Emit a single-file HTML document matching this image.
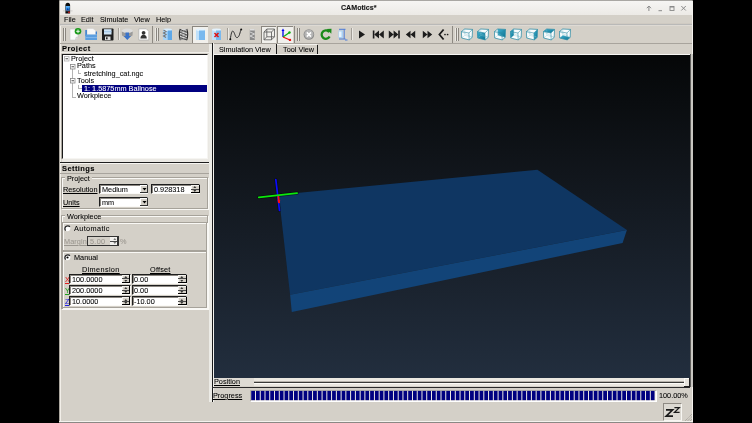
<!DOCTYPE html>
<html><head><meta charset="utf-8"><style>
html,body{margin:0;padding:0;background:#000;width:752px;height:423px;overflow:hidden;position:relative;}
.t{position:absolute;will-change:transform;white-space:nowrap;line-height:1;font-family:"Liberation Sans",sans-serif;}
.b{position:absolute;}
u{text-decoration:underline;}
</style></head><body>
<div class="b" style="left:59px;top:1px;width:634px;height:421px;background:#d4d0c8;"></div>
<div class="b" style="left:59px;top:0px;width:634px;height:1px;background:#a9a7a3;border-radius:2px 2px 0 0;"></div>
<div class="b" style="left:59px;top:1px;width:1px;height:421px;background:#aba79f;"></div>
<div class="b" style="left:60px;top:15px;width:1px;height:406px;background:#f2efe9;"></div>
<div class="b" style="left:692px;top:1px;width:1px;height:421px;background:#f4f2ee;"></div>
<div class="b" style="left:59px;top:421px;width:634px;height:1px;background:#f4f2ee;"></div>
<div class="b" style="left:59px;top:422px;width:634px;height:1px;background:#8a8884;"></div>
<div class="b" style="left:60px;top:1px;width:632px;height:14px;background:linear-gradient(#f6f5f3,#eceae6);"></div>
<div class="t" style="left:340.80px;top:4.99px;font-size:7.1px;font-weight:bold;-webkit-text-stroke:0.1px #111;color:#111;">CAMotics*</div>
<svg class="b" style="left:63px;top:1.5px;" width="10" height="13" viewBox="0 0 10 13"><path d="M2.4,3.5 Q2.4,0.8 4.8,0.8 Q7.1,0.8 7.1,3.5 V11.4 H2.4 Z" fill="#0c0c0c"/><rect x="2.8" y="4" width="3.9" height="4.6" fill="#2f8fe8"/><rect x="2.8" y="4" width="3.9" height="1.6" fill="#5ab0f5"/><path d="M3.4,8.6 L4.75,5.8 L6.1,8.6 Z" fill="#0a3fa0"/><path d="M0,8.9 H9.5" stroke="#a8a8a8" stroke-width="0.45"/><rect x="5.2" y="9.6" width="1.6" height="1.5" fill="#d02020"/></svg>
<svg class="b" style="left:645px;top:3px;" width="48" height="10" viewBox="0 0 48 10"><path d="M3.9,8 V3.2 M1.8,5.2 L3.9,3 L6,5.2" stroke="#8a8a8a" stroke-width="1" fill="none"/><path d="M13.5,7.7 H17" stroke="#8a8a8a" stroke-width="1"/><rect x="25" y="3.5" width="4" height="4" fill="none" stroke="#888" stroke-width="0.9"/><rect x="25" y="3.3" width="4" height="1.2" fill="#888"/><path d="M36.3,3 L40.8,7.5 M40.8,3 L36.3,7.5" stroke="#8a8a8a" stroke-width="1"/></svg>
<div class="b" style="left:60px;top:15px;width:632px;height:10px;background:#d4d0c8;"></div>
<div class="t" style="left:63.90px;top:15.92px;font-size:7.3px;-webkit-text-stroke:0.06px #000;color:#000;"><u>F</u>ile</div>
<div class="t" style="left:80.80px;top:15.92px;font-size:7.3px;-webkit-text-stroke:0.06px #000;color:#000;">Edit</div>
<div class="t" style="left:99.70px;top:15.92px;font-size:7.3px;-webkit-text-stroke:0.06px #000;color:#000;">Simulate</div>
<div class="t" style="left:134.00px;top:15.92px;font-size:7.3px;-webkit-text-stroke:0.06px #000;color:#000;">View</div>
<div class="t" style="left:155.60px;top:15.92px;font-size:7.3px;-webkit-text-stroke:0.06px #000;color:#000;"><u>H</u>elp</div>
<div class="b" style="left:60px;top:23px;width:632px;height:1px;background:#cfcac2;"></div>
<div class="b" style="left:60px;top:24px;width:632px;height:1px;background:#b9b9b8;"></div>
<div class="b" style="left:60px;top:25px;width:632px;height:1px;background:#dedad4;"></div>
<div class="b" style="left:60px;top:43px;width:632px;height:1px;background:#a8a49d;"></div>
<div class="b" style="left:62.5px;top:27.5px;width:3.6px;height:13px;background:#e9e7e2;"></div>
<div class="b" style="left:63.0px;top:27.5px;width:0.9px;height:13px;background:#8a867f;"></div>
<div class="b" style="left:65.0px;top:27.5px;width:0.9px;height:13px;background:#8a867f;"></div>
<svg class="b" style="left:69px;top:28px;" width="13" height="13" viewBox="0 0 13 13"><path d="M1,1 H9 V9 L6.5,12 H1 Z" fill="#fafafa" stroke="#c8c8c8" stroke-width="0.6"/><path d="M6.5,12 L7,9.3 L10,9" fill="#ddd" stroke="#bbb" stroke-width="0.5"/><circle cx="9" cy="3.3" r="3.3" fill="#1c9a1c"/><path d="M9,1.5 V5.1 M7.2,3.3 H10.8" stroke="#fff" stroke-width="0.9"/></svg>
<svg class="b" style="left:85px;top:28px;" width="13" height="13" viewBox="0 0 13 13"><path d="M2,0.5 H8 L11,3 V7 H2 Z" fill="#f8f8f8" stroke="#cfcfcf" stroke-width="0.5"/><rect x="0.3" y="2" width="1.6" height="6" fill="#3a7fd0"/><rect x="10.6" y="3.5" width="1.4" height="3" fill="#3a7fd0"/><path d="M0.3,6.5 H12 V12 H0.3 Z" fill="#5b9ee0"/><rect x="0.3" y="9" width="11.7" height="1" fill="#7fb5ea"/></svg>
<svg class="b" style="left:102px;top:28px;" width="12" height="13" viewBox="0 0 12 13"><rect x="0" y="0.5" width="11.5" height="12" rx="0.8" fill="#1e1e1e"/><rect x="2" y="1.2" width="7.5" height="5.3" fill="#cfe4f5"/><rect x="2" y="3.2" width="7.5" height="1" fill="#9fc4e4"/><rect x="3" y="8.5" width="5.5" height="3.5" fill="#ddd"/><rect x="4" y="9.3" width="1.6" height="2" fill="#222"/></svg>
<div class="b" style="left:117.5px;top:28px;width:1px;height:12px;background:#a29e97;box-shadow:1px 0 0 #ebe9e4;"></div>
<svg class="b" style="left:121px;top:28px;" width="13" height="13" viewBox="0 0 13 13"><ellipse cx="6.3" cy="3" rx="5.5" ry="2.6" fill="#dcdcdc"/><path d="M0.8,3.5 Q6.3,6.5 11.8,3.5 L11.5,7.5 L6.3,10.5 L1,7.5 Z" fill="#9a9a9a"/><path d="M4.5,4.5 H8 V8 H10 L6.3,12 L2.6,8 H4.5 Z" fill="#3b73c8"/></svg>
<svg class="b" style="left:138px;top:28px;" width="12" height="13" viewBox="0 0 12 13"><path d="M0.8,0.8 H8.3 L10.8,3.3 V12 H0.8 Z" fill="#fff" stroke="#aaa" stroke-width="0.7"/><circle cx="5.6" cy="4.8" r="1.9" fill="#333"/><path d="M2.4,10.5 Q2.6,6.8 5.6,6.8 Q8.6,6.8 8.8,10.5 Z" fill="#333"/></svg>
<div class="b" style="left:152px;top:26px;width:1px;height:17px;background:#8d8982;"></div>
<div class="b" style="left:155px;top:27.5px;width:3.6px;height:13px;background:#e9e7e2;"></div>
<div class="b" style="left:155.5px;top:27.5px;width:0.9px;height:13px;background:#8a867f;"></div>
<div class="b" style="left:157.5px;top:27.5px;width:0.9px;height:13px;background:#8a867f;"></div>
<svg class="b" style="left:162px;top:28px;" width="11" height="13" viewBox="0 0 11 13"><rect x="1" y="1.5" width="9" height="10.5" fill="#a9d3f5"/><ellipse cx="5.5" cy="1.8" rx="4.5" ry="1.2" fill="#d9ecfb"/><rect x="5.7" y="2.5" width="4.3" height="9.5" fill="#5ea8e8"/><path d="M1.5,2 L4,3.5 L1.5,5 L4,6.5 L1.5,8 L4,9.5" stroke="#777" stroke-width="1.1" fill="none"/></svg>
<svg class="b" style="left:178px;top:28px;" width="11" height="13" viewBox="0 0 11 13"><rect x="2" y="1" width="7" height="11" fill="#d8d8d8"/><path d="M2.2,1 Q0.4,6.5 2.2,12 M8.8,1 Q10.6,6.5 8.8,12" stroke="#2a2a2a" stroke-width="1.1" fill="none"/><path d="M2,1.5 Q5.5,3 9,4.2 M2,4.2 Q5.5,5.6 9,7 M2,7 Q5.5,8.3 9,9.7 M2,9.7 Q5.5,11 9,12" stroke="#333" stroke-width="0.9" fill="none"/><path d="M9,1.5 Q5.5,3 2,4.2 M9,4.2 Q5.5,5.6 2,7 M9,7 Q5.5,8.3 2,9.7 M9,9.7 Q5.5,11 2,12" stroke="#777" stroke-width="0.7" fill="none"/></svg>
<div class="b" style="left:192.4px;top:26px;width:15.400000000000006px;height:17px;background:#f1f0ec;border-left:1px solid #8a867f;border-top:1px solid #8a867f;box-sizing:border-box;"></div>
<svg class="b" style="left:195px;top:28px;" width="11" height="13" viewBox="0 0 11 13"><rect x="1" y="1.5" width="9" height="10.5" fill="#bfe0fa"/><ellipse cx="5.5" cy="1.8" rx="4.5" ry="1.2" fill="#e3f2fd"/><rect x="4" y="2.5" width="6" height="9.5" fill="#7ab9ee"/></svg>
<svg class="b" style="left:211px;top:28px;" width="11" height="13" viewBox="0 0 11 13"><rect x="1" y="1.5" width="9" height="10.5" fill="#bfe0fa"/><ellipse cx="5.5" cy="1.8" rx="4.5" ry="1.2" fill="#e3f2fd"/><rect x="5" y="2.5" width="5" height="9.5" fill="#7ab9ee"/><path d="M3.5,5 L7.5,9 M7.5,5 L3.5,9" stroke="#e01010" stroke-width="1.5"/></svg>
<div class="b" style="left:226.6px;top:28px;width:1px;height:12px;background:#a29e97;box-shadow:1px 0 0 #ebe9e4;"></div>
<svg class="b" style="left:229px;top:28px;" width="14" height="13" viewBox="0 0 14 13"><path d="M1.3,11.3 C2.5,3 3.5,1.5 5,4.5 C6.3,7 6.5,10 8.3,9.5 C10.5,9 11,4 12,1.5" stroke="#2a2a2a" stroke-width="1" fill="none"/><circle cx="1.3" cy="11.3" r="1" fill="#111"/><circle cx="12.2" cy="1.6" r="1" fill="#111"/></svg>
<svg class="b" style="left:249px;top:28px;" width="7" height="13" viewBox="0 0 7 13"><rect x="0.8" y="1" width="5" height="11" fill="#8a8a8a"/><rect x="0.8" y="1" width="5" height="1.5" fill="#ddd"/><path d="M1,4 L5.5,6 L1,8 L5.5,10" stroke="#ddd" stroke-width="0.9" fill="none"/></svg>
<div class="b" style="left:261.3px;top:26px;width:15.199999999999989px;height:17px;background:#f1f0ec;border-left:1px solid #8a867f;border-top:1px solid #8a867f;box-sizing:border-box;"></div>
<svg class="b" style="left:262.5px;top:28px;" width="13" height="13" viewBox="0 0 13 13"><path d="M1,4 H8.5 V11.8 H1 Z M3.8,1 H11.5 V8.8 H3.8 Z M1,4 L3.8,1 M8.5,4 L11.5,1 M8.5,11.8 L11.5,8.8 M1,11.8 L3.8,8.8" stroke="#555" stroke-width="0.8" fill="none"/></svg>
<div class="b" style="left:277.3px;top:26px;width:16.19999999999999px;height:17px;background:#f1f0ec;border-left:1px solid #8a867f;border-top:1px solid #8a867f;box-sizing:border-box;"></div>
<svg class="b" style="left:280.5px;top:28px;" width="11" height="13" viewBox="0 0 11 13"><path d="M2,9 L2,2" stroke="#0000f0" stroke-width="1.3"/><path d="M0.5,3 L2,0.5 L3.5,3 Z" fill="#0000f0"/><path d="M2,9 L8.5,4.5" stroke="#10b010" stroke-width="1.3"/><circle cx="8.5" cy="4.5" r="1.2" fill="#10b010"/><path d="M2,9 L9,12" stroke="#f01010" stroke-width="1.3"/><circle cx="9" cy="12" r="1.2" fill="#f01010"/></svg>
<div class="b" style="left:294px;top:26px;width:1px;height:17px;background:#8d8982;"></div>
<div class="b" style="left:296.5px;top:27.5px;width:3.6px;height:13px;background:#e9e7e2;"></div>
<div class="b" style="left:297.0px;top:27.5px;width:0.9px;height:13px;background:#8a867f;"></div>
<div class="b" style="left:299.0px;top:27.5px;width:0.9px;height:13px;background:#8a867f;"></div>
<svg class="b" style="left:302.5px;top:28px;" width="12" height="13" viewBox="0 0 12 13"><circle cx="5.9" cy="6.5" r="5.3" fill="#8a8a8a"/><circle cx="5.9" cy="6.2" r="4.5" fill="#b4b4b4"/><path d="M3.8,4.4 L8,8.6 M8,4.4 L3.8,8.6" stroke="#fff" stroke-width="1.5"/></svg>
<svg class="b" style="left:319.5px;top:28px;" width="12" height="13" viewBox="0 0 12 13"><path d="M9.3,4.2 A4.2,4.2 0 1 0 9.6,8.5" stroke="#1a8a1a" stroke-width="2.3" fill="none"/><path d="M6.5,1 L11.5,0.8 L11.3,5.8 Z" fill="#1a8a1a"/></svg>
<svg class="b" style="left:338px;top:28px;" width="10" height="13" viewBox="0 0 10 13"><rect x="0.5" y="2.5" width="4.5" height="7.5" fill="#a8d0f5"/><rect x="1" y="3.5" width="2.5" height="5.5" fill="#e8f4fd"/><path d="M1,1.3 H7.5 M6.2,1.3 V11 M1,11 H7.5 M7,12 H9.5" stroke="#4a7ad8" stroke-width="1" fill="none"/></svg>
<div class="b" style="left:351.4px;top:28px;width:1px;height:12px;background:#a29e97;box-shadow:1px 0 0 #ebe9e4;"></div>
<svg class="b" style="left:357.5px;top:29px;" width="8" height="11" viewBox="0 0 8 11"><path d="M1,1.5 L7,5.5 L1,9.5 Z" fill="#1c1c1c"/></svg>
<svg class="b" style="left:371.5px;top:29px;" width="13" height="11" viewBox="0 0 13 11"><rect x="0.8" y="1.5" width="1.6" height="8" fill="#1c1c1c"/><path d="M2.2,5.5 L7,1.5 V9.5 Z M7,5.5 L11.8,1.5 V9.5 Z" fill="#1c1c1c"/></svg>
<svg class="b" style="left:388px;top:29px;" width="13" height="11" viewBox="0 0 13 11"><rect x="10.2" y="1.5" width="1.6" height="8" fill="#1c1c1c"/><path d="M0.8,1.5 L5.6,5.5 L0.8,9.5 Z M5.6,1.5 L10.4,5.5 L5.6,9.5 Z" fill="#1c1c1c"/></svg>
<svg class="b" style="left:405px;top:29px;" width="12" height="11" viewBox="0 0 12 11"><path d="M0.8,5.5 L5.5,1.8 V9.2 Z M5.5,5.5 L10.2,1.8 V9.2 Z" fill="#1c1c1c"/></svg>
<svg class="b" style="left:421.5px;top:29px;" width="12" height="11" viewBox="0 0 12 11"><path d="M0.8,1.8 L5.5,5.5 L0.8,9.2 Z M5.5,1.8 L10.2,5.5 L5.5,9.2 Z" fill="#1c1c1c"/></svg>
<svg class="b" style="left:437.5px;top:28px;" width="12" height="13" viewBox="0 0 12 13"><path d="M5.6,1.5 L1.4,6.5 L5.6,11.5" stroke="#1c1c1c" stroke-width="1.8" fill="none"/><circle cx="7" cy="6.5" r="0.85" fill="#1c1c1c"/><circle cx="9.6" cy="6.5" r="0.85" fill="#1c1c1c"/></svg>
<div class="b" style="left:452px;top:26px;width:1px;height:17px;background:#8d8982;"></div>
<div class="b" style="left:455px;top:27.5px;width:3.6px;height:13px;background:#e9e7e2;"></div>
<div class="b" style="left:455.5px;top:27.5px;width:0.9px;height:13px;background:#8a867f;"></div>
<div class="b" style="left:457.5px;top:27.5px;width:0.9px;height:13px;background:#8a867f;"></div>
<svg width="0" height="0" style="position:absolute"><defs><linearGradient id="tg" x1="0" y1="0" x2="1" y2="1"><stop offset="0" stop-color="#3eb0d0"/><stop offset="1" stop-color="#0b7392"/></linearGradient></defs></svg>
<svg class="b" style="left:460.8px;top:28px;" width="12" height="13" viewBox="0 0 12 13"><polygon points="0.40,3.60 3.70,1.00 11.50,1.40 11.20,9.40 8.20,11.90 0.70,10.00" fill="#f9fcfd"/><line x1="3.9" y1="7.3" x2="3.7" y2="1.0" stroke="#8cc4d2" stroke-width="0.35"/><line x1="3.9" y1="7.3" x2="0.7" y2="10.0" stroke="#8cc4d2" stroke-width="0.35"/><line x1="3.9" y1="7.3" x2="11.2" y2="9.4" stroke="#8cc4d2" stroke-width="0.35"/><line x1="0.4" y1="3.6" x2="11.2" y2="9.4" stroke="#7cbccc" stroke-width="0.35"/><line x1="0.4" y1="3.6" x2="7.9" y2="5.0" stroke="#2b8aa3" stroke-width="0.6"/><line x1="7.9" y1="5.0" x2="11.5" y2="1.4" stroke="#2b8aa3" stroke-width="0.6"/><line x1="7.9" y1="5.0" x2="8.2" y2="11.9" stroke="#2b8aa3" stroke-width="0.6"/><polygon points="0.40,3.60 3.70,1.00 11.50,1.40 11.20,9.40 8.20,11.90 0.70,10.00" fill="none" stroke="#2b8aa3" stroke-width="0.75" stroke-linejoin="round"/></svg>
<svg class="b" style="left:477.15000000000003px;top:28px;" width="12" height="13" viewBox="0 0 12 13"><polygon points="0.40,3.60 3.70,1.00 11.50,1.40 11.20,9.40 8.20,11.90 0.70,10.00" fill="#f9fcfd"/><polygon points="0.40,3.60 7.90,5.00 8.20,11.90 0.70,10.00" fill="url(#tg)"/><line x1="3.9" y1="7.3" x2="3.7" y2="1.0" stroke="#8cc4d2" stroke-width="0.35"/><line x1="3.9" y1="7.3" x2="0.7" y2="10.0" stroke="#8cc4d2" stroke-width="0.35"/><line x1="3.9" y1="7.3" x2="11.2" y2="9.4" stroke="#8cc4d2" stroke-width="0.35"/><line x1="0.4" y1="3.6" x2="11.2" y2="9.4" stroke="#7cbccc" stroke-width="0.35"/><line x1="0.4" y1="3.6" x2="7.9" y2="5.0" stroke="#2b8aa3" stroke-width="0.6"/><line x1="7.9" y1="5.0" x2="11.5" y2="1.4" stroke="#2b8aa3" stroke-width="0.6"/><line x1="7.9" y1="5.0" x2="8.2" y2="11.9" stroke="#2b8aa3" stroke-width="0.6"/><polygon points="0.40,3.60 3.70,1.00 11.50,1.40 11.20,9.40 8.20,11.90 0.70,10.00" fill="none" stroke="#2b8aa3" stroke-width="0.75" stroke-linejoin="round"/></svg>
<svg class="b" style="left:493.5px;top:28px;" width="12" height="13" viewBox="0 0 12 13"><polygon points="0.40,3.60 3.70,1.00 11.50,1.40 11.20,9.40 8.20,11.90 0.70,10.00" fill="#f9fcfd"/><polygon points="3.70,1.00 11.50,1.40 11.20,9.40 3.90,7.30" fill="url(#tg)"/><line x1="3.9" y1="7.3" x2="3.7" y2="1.0" stroke="#8cc4d2" stroke-width="0.35"/><line x1="3.9" y1="7.3" x2="0.7" y2="10.0" stroke="#8cc4d2" stroke-width="0.35"/><line x1="3.9" y1="7.3" x2="11.2" y2="9.4" stroke="#8cc4d2" stroke-width="0.35"/><line x1="0.4" y1="3.6" x2="11.2" y2="9.4" stroke="#7cbccc" stroke-width="0.35"/><line x1="0.4" y1="3.6" x2="7.9" y2="5.0" stroke="#2b8aa3" stroke-width="0.6"/><line x1="7.9" y1="5.0" x2="11.5" y2="1.4" stroke="#2b8aa3" stroke-width="0.6"/><line x1="7.9" y1="5.0" x2="8.2" y2="11.9" stroke="#2b8aa3" stroke-width="0.6"/><polygon points="0.40,3.60 3.70,1.00 11.50,1.40 11.20,9.40 8.20,11.90 0.70,10.00" fill="none" stroke="#2b8aa3" stroke-width="0.75" stroke-linejoin="round"/></svg>
<svg class="b" style="left:509.85px;top:28px;" width="12" height="13" viewBox="0 0 12 13"><polygon points="0.40,3.60 3.70,1.00 11.50,1.40 11.20,9.40 8.20,11.90 0.70,10.00" fill="#f9fcfd"/><polygon points="0.40,3.60 3.70,1.00 3.90,7.30 0.70,10.00" fill="url(#tg)"/><line x1="3.9" y1="7.3" x2="3.7" y2="1.0" stroke="#8cc4d2" stroke-width="0.35"/><line x1="3.9" y1="7.3" x2="0.7" y2="10.0" stroke="#8cc4d2" stroke-width="0.35"/><line x1="3.9" y1="7.3" x2="11.2" y2="9.4" stroke="#8cc4d2" stroke-width="0.35"/><line x1="0.4" y1="3.6" x2="11.2" y2="9.4" stroke="#7cbccc" stroke-width="0.35"/><line x1="0.4" y1="3.6" x2="7.9" y2="5.0" stroke="#2b8aa3" stroke-width="0.6"/><line x1="7.9" y1="5.0" x2="11.5" y2="1.4" stroke="#2b8aa3" stroke-width="0.6"/><line x1="7.9" y1="5.0" x2="8.2" y2="11.9" stroke="#2b8aa3" stroke-width="0.6"/><polygon points="0.40,3.60 3.70,1.00 11.50,1.40 11.20,9.40 8.20,11.90 0.70,10.00" fill="none" stroke="#2b8aa3" stroke-width="0.75" stroke-linejoin="round"/></svg>
<svg class="b" style="left:526.2px;top:28px;" width="12" height="13" viewBox="0 0 12 13"><polygon points="0.40,3.60 3.70,1.00 11.50,1.40 11.20,9.40 8.20,11.90 0.70,10.00" fill="#f9fcfd"/><polygon points="7.90,5.00 11.50,1.40 11.20,9.40 8.20,11.90" fill="url(#tg)"/><line x1="3.9" y1="7.3" x2="3.7" y2="1.0" stroke="#8cc4d2" stroke-width="0.35"/><line x1="3.9" y1="7.3" x2="0.7" y2="10.0" stroke="#8cc4d2" stroke-width="0.35"/><line x1="3.9" y1="7.3" x2="11.2" y2="9.4" stroke="#8cc4d2" stroke-width="0.35"/><line x1="0.4" y1="3.6" x2="11.2" y2="9.4" stroke="#7cbccc" stroke-width="0.35"/><line x1="0.4" y1="3.6" x2="7.9" y2="5.0" stroke="#2b8aa3" stroke-width="0.6"/><line x1="7.9" y1="5.0" x2="11.5" y2="1.4" stroke="#2b8aa3" stroke-width="0.6"/><line x1="7.9" y1="5.0" x2="8.2" y2="11.9" stroke="#2b8aa3" stroke-width="0.6"/><polygon points="0.40,3.60 3.70,1.00 11.50,1.40 11.20,9.40 8.20,11.90 0.70,10.00" fill="none" stroke="#2b8aa3" stroke-width="0.75" stroke-linejoin="round"/></svg>
<svg class="b" style="left:542.55px;top:28px;" width="12" height="13" viewBox="0 0 12 13"><polygon points="0.40,3.60 3.70,1.00 11.50,1.40 11.20,9.40 8.20,11.90 0.70,10.00" fill="#f9fcfd"/><polygon points="0.40,3.60 3.70,1.00 11.50,1.40 7.90,5.00" fill="url(#tg)"/><line x1="3.9" y1="7.3" x2="3.7" y2="1.0" stroke="#8cc4d2" stroke-width="0.35"/><line x1="3.9" y1="7.3" x2="0.7" y2="10.0" stroke="#8cc4d2" stroke-width="0.35"/><line x1="3.9" y1="7.3" x2="11.2" y2="9.4" stroke="#8cc4d2" stroke-width="0.35"/><line x1="0.4" y1="3.6" x2="11.2" y2="9.4" stroke="#7cbccc" stroke-width="0.35"/><line x1="0.4" y1="3.6" x2="7.9" y2="5.0" stroke="#2b8aa3" stroke-width="0.6"/><line x1="7.9" y1="5.0" x2="11.5" y2="1.4" stroke="#2b8aa3" stroke-width="0.6"/><line x1="7.9" y1="5.0" x2="8.2" y2="11.9" stroke="#2b8aa3" stroke-width="0.6"/><polygon points="0.40,3.60 3.70,1.00 11.50,1.40 11.20,9.40 8.20,11.90 0.70,10.00" fill="none" stroke="#2b8aa3" stroke-width="0.75" stroke-linejoin="round"/></svg>
<svg class="b" style="left:558.9px;top:28px;" width="12" height="13" viewBox="0 0 12 13"><polygon points="0.40,3.60 3.70,1.00 11.50,1.40 11.20,9.40 8.20,11.90 0.70,10.00" fill="#f9fcfd"/><polygon points="0.70,10.00 3.90,7.30 11.20,9.40 8.20,11.90" fill="url(#tg)"/><line x1="3.9" y1="7.3" x2="3.7" y2="1.0" stroke="#8cc4d2" stroke-width="0.35"/><line x1="3.9" y1="7.3" x2="0.7" y2="10.0" stroke="#8cc4d2" stroke-width="0.35"/><line x1="3.9" y1="7.3" x2="11.2" y2="9.4" stroke="#8cc4d2" stroke-width="0.35"/><line x1="0.4" y1="3.6" x2="11.2" y2="9.4" stroke="#7cbccc" stroke-width="0.35"/><line x1="0.4" y1="3.6" x2="7.9" y2="5.0" stroke="#2b8aa3" stroke-width="0.6"/><line x1="7.9" y1="5.0" x2="11.5" y2="1.4" stroke="#2b8aa3" stroke-width="0.6"/><line x1="7.9" y1="5.0" x2="8.2" y2="11.9" stroke="#2b8aa3" stroke-width="0.6"/><polygon points="0.40,3.60 3.70,1.00 11.50,1.40 11.20,9.40 8.20,11.90 0.70,10.00" fill="none" stroke="#2b8aa3" stroke-width="0.75" stroke-linejoin="round"/></svg>
<div class="t" style="left:62.00px;top:45.45px;font-size:7.5px;font-weight:bold;-webkit-text-stroke:0.1px #000;color:#000;letter-spacing:0.45px;">Project</div>
<div class="b" style="left:61px;top:52px;width:149px;height:1px;background:#f0eee9;"></div>
<div class="b" style="left:61px;top:54px;width:1px;height:105px;background:#aaa69e;"></div>
<div class="b" style="left:62px;top:158px;width:148px;height:4px;background:#eae8e3;"></div>
<div class="b" style="left:207px;top:54px;width:3px;height:108px;background:#eae8e3;"></div>
<div class="b" style="left:62px;top:54px;width:146px;height:105px;background:#fff;border-top:1px solid #1a1a1a;border-left:1px solid #1a1a1a;border-right:1px solid #f6f5f2;border-bottom:1px solid #f6f5f2;box-sizing:border-box;"></div>
<div class="b" style="left:72.2px;top:68px;width:0.8px;height:29px;background:#b4b4b4;"></div>
<div class="b" style="left:72.2px;top:96.5px;width:3.5px;height:0.8px;background:#b4b4b4;"></div>
<div class="b" style="left:78.1px;top:69.5px;width:0.8px;height:4.5px;background:#b4b4b4;"></div>
<div class="b" style="left:78.1px;top:73.3px;width:3.3px;height:0.8px;background:#b4b4b4;"></div>
<div class="b" style="left:78.1px;top:85px;width:0.8px;height:3.5px;background:#b4b4b4;"></div>
<div class="b" style="left:78.1px;top:88px;width:3.5px;height:0.8px;background:#b4b4b4;"></div>
<svg class="b" style="left:63.8px;top:56.3px;" width="6" height="6" viewBox="0 0 6 6"><rect x="0.5" y="0.5" width="4.5" height="4.5" fill="#fff" stroke="#b0b0b0" stroke-width="0.8"/><path d="M1.5,2.75 H4" stroke="#222" stroke-width="0.8"/></svg>
<svg class="b" style="left:69.8px;top:63.6px;" width="6" height="6" viewBox="0 0 6 6"><rect x="0.5" y="0.5" width="4.5" height="4.5" fill="#fff" stroke="#888" stroke-width="0.8"/><path d="M1.5,2.75 H4" stroke="#222" stroke-width="0.8"/></svg>
<svg class="b" style="left:69.8px;top:78.2px;" width="6" height="6" viewBox="0 0 6 6"><rect x="0.5" y="0.5" width="4.5" height="4.5" fill="#fff" stroke="#888" stroke-width="0.8"/><path d="M1.5,2.75 H4" stroke="#222" stroke-width="0.8"/></svg>
<div class="t" style="left:70.80px;top:55.22px;font-size:7.3px;-webkit-text-stroke:0.06px #000;color:#000;">Project</div>
<div class="t" style="left:77.10px;top:61.92px;font-size:7.3px;-webkit-text-stroke:0.06px #000;color:#000;">Paths</div>
<div class="t" style="left:83.50px;top:69.82px;font-size:7.3px;-webkit-text-stroke:0.06px #000;color:#000;">stretching_cat.ngc</div>
<div class="t" style="left:77.10px;top:77.12px;font-size:7.3px;-webkit-text-stroke:0.06px #000;color:#000;">Tools</div>
<div class="b" style="left:81.9px;top:84.5px;width:125.1px;height:7.2px;background:#000080;"></div>
<div class="t" style="left:83.80px;top:85.02px;font-size:7.3px;-webkit-text-stroke:0.06px #fff;color:#fff;">1: 1.5875mm Ballnose</div>
<div class="t" style="left:77.10px;top:92.32px;font-size:7.3px;-webkit-text-stroke:0.06px #000;color:#000;">Workpiece</div>
<div class="b" style="left:60px;top:162px;width:152px;height:1px;background:#1e1e1e;"></div>
<div class="b" style="left:60px;top:163px;width:152px;height:1px;background:#f6f5f1;"></div>
<div class="t" style="left:62.00px;top:165.05px;font-size:7.5px;font-weight:bold;-webkit-text-stroke:0.1px #000;color:#000;letter-spacing:0.42px;">Settings</div>
<div class="b" style="left:60px;top:173px;width:149px;height:1px;background:#a8a49d;"></div>
<div class="b" style="left:61px;top:177px;width:147px;height:32px;border:1px solid #a6a29a;box-shadow:inset 1px 1px 0 #f9f8f5, 1px 1px 0 #f9f8f5;box-sizing:border-box;"></div>
<div class="b" style="left:65px;top:174px;width:27px;height:6px;background:#d4d0c8;"></div>
<div class="t" style="left:66.60px;top:174.82px;font-size:7.3px;-webkit-text-stroke:0.06px #000;color:#000;">Project</div>
<div class="t" style="left:62.80px;top:185.82px;font-size:7.3px;-webkit-text-stroke:0.06px #000;color:#000;"><u>Resolution</u></div>
<div class="b" style="left:99px;top:183.6px;width:49px;height:10.5px;background:#fff;border-top:1.3px solid #1e1e1e;border-left:1.3px solid #1e1e1e;border-right:1px solid #fbfaf7;border-bottom:1px solid #fbfaf7;box-sizing:border-box;box-shadow:inset 1px 1px 0 #8c8882;"></div>
<div class="b" style="left:139.5px;top:184.8px;width:8px;height:8.5px;background:#d4d0c8;border-right:1px solid #333;border-bottom:1px solid #333;box-shadow:inset 1px 1px 0 #fff;box-sizing:border-box;"></div>
<svg class="b" style="left:141.7px;top:187.8px;" width="5" height="3" viewBox="0 0 5 3"><polygon points="0.5,0 4.5,0 2.5,2.6" fill="#000"/></svg>
<div class="t" style="left:101.80px;top:186.02px;font-size:7.3px;-webkit-text-stroke:0.06px #000;color:#000;">Medium</div>
<div class="b" style="left:151px;top:183.6px;width:49px;height:10.5px;background:#fff;border-top:1.3px solid #1e1e1e;border-left:1.3px solid #1e1e1e;border-right:1px solid #fbfaf7;border-bottom:1px solid #fbfaf7;box-sizing:border-box;box-shadow:inset 1px 1px 0 #8c8882;"></div>
<div class="b" style="left:191px;top:184.8px;width:8.5px;height:8.5px;background:#d4d0c8;box-shadow:inset 1px 1px 0 #f4f2ee;"></div>
<div class="b" style="left:191px;top:188.55px;width:8.5px;height:0.8px;background:#4a4a4a;"></div>
<div class="b" style="left:191px;top:192.3px;width:8.5px;height:1px;background:#000;"></div>
<div class="b" style="left:198.5px;top:184.8px;width:1px;height:8.5px;background:#000;"></div>
<svg class="b" style="left:193.3px;top:186.10000000000002px;" width="4" height="2" viewBox="0 0 4 2"><polygon points="0.3,1.8 3.3,1.8 1.8,0.2" fill="#000"/></svg>
<svg class="b" style="left:193.3px;top:189.85000000000002px;" width="4" height="2" viewBox="0 0 4 2"><polygon points="0.3,0.2 3.3,0.2 1.8,1.8" fill="#000"/></svg>
<div class="t" style="left:153.60px;top:186.02px;font-size:7.3px;-webkit-text-stroke:0.06px #000;color:#000;">0.928318</div>
<div class="t" style="left:62.80px;top:199.22px;font-size:7.3px;-webkit-text-stroke:0.06px #000;color:#000;"><u>Units</u></div>
<div class="b" style="left:99px;top:196.6px;width:49px;height:10.5px;background:#fff;border-top:1.3px solid #1e1e1e;border-left:1.3px solid #1e1e1e;border-right:1px solid #fbfaf7;border-bottom:1px solid #fbfaf7;box-sizing:border-box;box-shadow:inset 1px 1px 0 #8c8882;"></div>
<div class="b" style="left:139.5px;top:197.8px;width:8px;height:8.5px;background:#d4d0c8;border-right:1px solid #333;border-bottom:1px solid #333;box-shadow:inset 1px 1px 0 #fff;box-sizing:border-box;"></div>
<svg class="b" style="left:141.7px;top:200.8px;" width="5" height="3" viewBox="0 0 5 3"><polygon points="0.5,0 4.5,0 2.5,2.6" fill="#000"/></svg>
<div class="t" style="left:101.80px;top:199.02px;font-size:7.3px;-webkit-text-stroke:0.06px #000;color:#000;">mm</div>
<div class="b" style="left:61px;top:215px;width:147px;height:94px;border:1px solid #a6a29a;box-shadow:inset 1px 1px 0 #f9f8f5, 1px 1px 0 #f9f8f5;box-sizing:border-box;"></div>
<div class="b" style="left:65px;top:212px;width:36px;height:6px;background:#d4d0c8;"></div>
<div class="t" style="left:66.60px;top:213.22px;font-size:7.3px;-webkit-text-stroke:0.06px #000;color:#000;">Workpiece</div>
<div class="b" style="left:62px;top:222px;width:145px;height:29px;border:1px solid #a6a29a;box-shadow:inset 1px 1px 0 #f9f8f5, 1px 1px 0 #f9f8f5;box-sizing:border-box;"></div>
<div class="b" style="left:62px;top:251px;width:145px;height:57px;border:1px solid #a6a29a;box-shadow:inset 1px 1px 0 #f9f8f5, 1px 1px 0 #f9f8f5;box-sizing:border-box;"></div>
<svg class="b" style="left:63.8px;top:225.2px;" width="7" height="7" viewBox="0 0 7 7"><circle cx="3.3" cy="3.3" r="3" fill="#fff"/><path d="M5.9,1.8 A2.7,2.7 0 1 0 1.6,5.6" stroke="#222" stroke-width="1.3" fill="none"/></svg>
<div class="t" style="left:73.80px;top:225.12px;font-size:7.3px;-webkit-text-stroke:0.06px #000;color:#000;letter-spacing:0.38px;">Automatic</div>
<div class="t" style="left:64.40px;top:238.12px;font-size:7.3px;-webkit-text-stroke:0.06px #9a968f;color:#9a968f;letter-spacing:0.1px;"><u>Margin</u></div>
<div class="b" style="left:87.2px;top:236.2px;width:32px;height:10px;border:1px solid #333;box-sizing:border-box;"></div>
<div class="t" style="left:89.50px;top:238.12px;font-size:7.3px;-webkit-text-stroke:0.06px #9a968f;color:#9a968f;letter-spacing:0.3px;">5.00</div>
<div class="b" style="left:110.3px;top:237.2px;width:8px;height:8px;background:#d4d0c8;box-shadow:inset 1px 1px 0 #f4f2ee;"></div>
<div class="b" style="left:110.3px;top:240.7px;width:8px;height:0.8px;background:#4a4a4a;"></div>
<div class="b" style="left:110.3px;top:244.2px;width:8px;height:1px;background:#333;"></div>
<div class="b" style="left:117.3px;top:237.2px;width:1px;height:8px;background:#333;"></div>
<svg class="b" style="left:112.6px;top:238.5px;" width="4" height="2" viewBox="0 0 4 2"><polygon points="0.3,1.8 3.3,1.8 1.8,0.2" fill="#333"/></svg>
<svg class="b" style="left:112.6px;top:242.0px;" width="4" height="2" viewBox="0 0 4 2"><polygon points="0.3,0.2 3.3,0.2 1.8,1.8" fill="#333"/></svg>
<div class="b" style="left:110.3px;top:237.6px;width:7px;height:3.3px;background:#f2f1ee;"></div>
<div class="b" style="left:110.3px;top:241.6px;width:7px;height:3.2px;background:#f2f1ee;"></div>
<svg class="b" style="left:112.5px;top:238.3px;" width="4" height="2" viewBox="0 0 4 2"><polygon points="0.3,1.8 3.3,1.8 1.8,0.2" fill="#555"/></svg>
<svg class="b" style="left:112.5px;top:242.3px;" width="4" height="2" viewBox="0 0 4 2"><polygon points="0.3,0.2 3.3,0.2 1.8,1.8" fill="#555"/></svg>
<div class="t" style="left:119.80px;top:238.42px;font-size:7.3px;-webkit-text-stroke:0.06px #9a968f;color:#9a968f;">%</div>
<svg class="b" style="left:63.8px;top:254.2px;" width="7" height="7" viewBox="0 0 7 7"><circle cx="3.3" cy="3.3" r="3" fill="#fff"/><path d="M5.9,1.8 A2.7,2.7 0 1 0 1.6,5.6" stroke="#222" stroke-width="1.3" fill="none"/><circle cx="3.5" cy="3.5" r="1.1" fill="#000"/></svg>
<div class="t" style="left:73.80px;top:254.22px;font-size:7.3px;-webkit-text-stroke:0.06px #000;color:#000;">Manual</div>
<div class="t" style="left:82.20px;top:266.02px;font-size:7.3px;-webkit-text-stroke:0.06px #000;color:#000;letter-spacing:0.36px;"><u>Dimension</u></div>
<div class="t" style="left:149.90px;top:266.02px;font-size:7.3px;-webkit-text-stroke:0.06px #000;color:#000;letter-spacing:0.2px;"><u>Offset</u></div>
<div class="t" style="left:64.60px;top:276.02px;font-size:7.3px;-webkit-text-stroke:0.06px #e02020;color:#e02020;"><u>X</u></div>
<div class="b" style="left:69px;top:273.5px;width:62px;height:10px;background:#fff;border-top:1.3px solid #1e1e1e;border-left:1.3px solid #1e1e1e;border-right:1px solid #fbfaf7;border-bottom:1px solid #fbfaf7;box-sizing:border-box;box-shadow:inset 1px 1px 0 #8c8882;"></div>
<div class="b" style="left:121.8px;top:274.7px;width:8.5px;height:8px;background:#d4d0c8;box-shadow:inset 1px 1px 0 #f4f2ee;"></div>
<div class="b" style="left:121.8px;top:278.2px;width:8.5px;height:0.8px;background:#4a4a4a;"></div>
<div class="b" style="left:121.8px;top:281.7px;width:8.5px;height:1px;background:#000;"></div>
<div class="b" style="left:129.3px;top:274.7px;width:1px;height:8px;background:#000;"></div>
<svg class="b" style="left:124.1px;top:276.0px;" width="4" height="2" viewBox="0 0 4 2"><polygon points="0.3,1.8 3.3,1.8 1.8,0.2" fill="#000"/></svg>
<svg class="b" style="left:124.1px;top:279.5px;" width="4" height="2" viewBox="0 0 4 2"><polygon points="0.3,0.2 3.3,0.2 1.8,1.8" fill="#000"/></svg>
<div class="t" style="left:71.80px;top:276.02px;font-size:7.3px;-webkit-text-stroke:0.06px #000;color:#000;">100.0000</div>
<div class="b" style="left:131.7px;top:273.5px;width:55.5px;height:10px;background:#fff;border-top:1.3px solid #1e1e1e;border-left:1.3px solid #1e1e1e;border-right:1px solid #fbfaf7;border-bottom:1px solid #fbfaf7;box-sizing:border-box;box-shadow:inset 1px 1px 0 #8c8882;"></div>
<div class="b" style="left:178px;top:274.7px;width:8.5px;height:8px;background:#d4d0c8;box-shadow:inset 1px 1px 0 #f4f2ee;"></div>
<div class="b" style="left:178px;top:278.2px;width:8.5px;height:0.8px;background:#4a4a4a;"></div>
<div class="b" style="left:178px;top:281.7px;width:8.5px;height:1px;background:#000;"></div>
<div class="b" style="left:185.5px;top:274.7px;width:1px;height:8px;background:#000;"></div>
<svg class="b" style="left:180.3px;top:276.0px;" width="4" height="2" viewBox="0 0 4 2"><polygon points="0.3,1.8 3.3,1.8 1.8,0.2" fill="#000"/></svg>
<svg class="b" style="left:180.3px;top:279.5px;" width="4" height="2" viewBox="0 0 4 2"><polygon points="0.3,0.2 3.3,0.2 1.8,1.8" fill="#000"/></svg>
<div class="t" style="left:133.80px;top:276.02px;font-size:7.3px;-webkit-text-stroke:0.06px #000;color:#000;">0.00</div>
<div class="t" style="left:64.60px;top:287.22px;font-size:7.3px;-webkit-text-stroke:0.06px #20a020;color:#20a020;"><u>Y</u></div>
<div class="b" style="left:69px;top:284.85px;width:62px;height:10px;background:#fff;border-top:1.3px solid #1e1e1e;border-left:1.3px solid #1e1e1e;border-right:1px solid #fbfaf7;border-bottom:1px solid #fbfaf7;box-sizing:border-box;box-shadow:inset 1px 1px 0 #8c8882;"></div>
<div class="b" style="left:121.8px;top:286.05px;width:8.5px;height:8px;background:#d4d0c8;box-shadow:inset 1px 1px 0 #f4f2ee;"></div>
<div class="b" style="left:121.8px;top:289.55px;width:8.5px;height:0.8px;background:#4a4a4a;"></div>
<div class="b" style="left:121.8px;top:293.05px;width:8.5px;height:1px;background:#000;"></div>
<div class="b" style="left:129.3px;top:286.05px;width:1px;height:8px;background:#000;"></div>
<svg class="b" style="left:124.1px;top:287.35px;" width="4" height="2" viewBox="0 0 4 2"><polygon points="0.3,1.8 3.3,1.8 1.8,0.2" fill="#000"/></svg>
<svg class="b" style="left:124.1px;top:290.85px;" width="4" height="2" viewBox="0 0 4 2"><polygon points="0.3,0.2 3.3,0.2 1.8,1.8" fill="#000"/></svg>
<div class="t" style="left:71.80px;top:287.22px;font-size:7.3px;-webkit-text-stroke:0.06px #000;color:#000;">200.0000</div>
<div class="b" style="left:131.7px;top:284.85px;width:55.5px;height:10px;background:#fff;border-top:1.3px solid #1e1e1e;border-left:1.3px solid #1e1e1e;border-right:1px solid #fbfaf7;border-bottom:1px solid #fbfaf7;box-sizing:border-box;box-shadow:inset 1px 1px 0 #8c8882;"></div>
<div class="b" style="left:178px;top:286.05px;width:8.5px;height:8px;background:#d4d0c8;box-shadow:inset 1px 1px 0 #f4f2ee;"></div>
<div class="b" style="left:178px;top:289.55px;width:8.5px;height:0.8px;background:#4a4a4a;"></div>
<div class="b" style="left:178px;top:293.05px;width:8.5px;height:1px;background:#000;"></div>
<div class="b" style="left:185.5px;top:286.05px;width:1px;height:8px;background:#000;"></div>
<svg class="b" style="left:180.3px;top:287.35px;" width="4" height="2" viewBox="0 0 4 2"><polygon points="0.3,1.8 3.3,1.8 1.8,0.2" fill="#000"/></svg>
<svg class="b" style="left:180.3px;top:290.85px;" width="4" height="2" viewBox="0 0 4 2"><polygon points="0.3,0.2 3.3,0.2 1.8,1.8" fill="#000"/></svg>
<div class="t" style="left:133.80px;top:287.22px;font-size:7.3px;-webkit-text-stroke:0.06px #000;color:#000;">0.00</div>
<div class="t" style="left:64.60px;top:297.82px;font-size:7.3px;-webkit-text-stroke:0.06px #2020e0;color:#2020e0;"><u>Z</u></div>
<div class="b" style="left:69px;top:296.2px;width:62px;height:10px;background:#fff;border-top:1.3px solid #1e1e1e;border-left:1.3px solid #1e1e1e;border-right:1px solid #fbfaf7;border-bottom:1px solid #fbfaf7;box-sizing:border-box;box-shadow:inset 1px 1px 0 #8c8882;"></div>
<div class="b" style="left:121.8px;top:297.4px;width:8.5px;height:8px;background:#d4d0c8;box-shadow:inset 1px 1px 0 #f4f2ee;"></div>
<div class="b" style="left:121.8px;top:300.9px;width:8.5px;height:0.8px;background:#4a4a4a;"></div>
<div class="b" style="left:121.8px;top:304.4px;width:8.5px;height:1px;background:#000;"></div>
<div class="b" style="left:129.3px;top:297.4px;width:1px;height:8px;background:#000;"></div>
<svg class="b" style="left:124.1px;top:298.7px;" width="4" height="2" viewBox="0 0 4 2"><polygon points="0.3,1.8 3.3,1.8 1.8,0.2" fill="#000"/></svg>
<svg class="b" style="left:124.1px;top:302.2px;" width="4" height="2" viewBox="0 0 4 2"><polygon points="0.3,0.2 3.3,0.2 1.8,1.8" fill="#000"/></svg>
<div class="t" style="left:71.80px;top:297.82px;font-size:7.3px;-webkit-text-stroke:0.06px #000;color:#000;">10.0000</div>
<div class="b" style="left:131.7px;top:296.2px;width:55.5px;height:10px;background:#fff;border-top:1.3px solid #1e1e1e;border-left:1.3px solid #1e1e1e;border-right:1px solid #fbfaf7;border-bottom:1px solid #fbfaf7;box-sizing:border-box;box-shadow:inset 1px 1px 0 #8c8882;"></div>
<div class="b" style="left:178px;top:297.4px;width:8.5px;height:8px;background:#d4d0c8;box-shadow:inset 1px 1px 0 #f4f2ee;"></div>
<div class="b" style="left:178px;top:300.9px;width:8.5px;height:0.8px;background:#4a4a4a;"></div>
<div class="b" style="left:178px;top:304.4px;width:8.5px;height:1px;background:#000;"></div>
<div class="b" style="left:185.5px;top:297.4px;width:1px;height:8px;background:#000;"></div>
<svg class="b" style="left:180.3px;top:298.7px;" width="4" height="2" viewBox="0 0 4 2"><polygon points="0.3,1.8 3.3,1.8 1.8,0.2" fill="#000"/></svg>
<svg class="b" style="left:180.3px;top:302.2px;" width="4" height="2" viewBox="0 0 4 2"><polygon points="0.3,0.2 3.3,0.2 1.8,1.8" fill="#000"/></svg>
<div class="t" style="left:133.80px;top:297.82px;font-size:7.3px;-webkit-text-stroke:0.06px #000;color:#000;">-10.00</div>
<div class="b" style="left:209px;top:44px;width:3px;height:358px;background:#ecebe6;"></div>
<div class="b" style="left:212px;top:43px;width:1px;height:359px;background:#1a1a1a;"></div>
<div class="b" style="left:213px;top:43px;width:1px;height:359px;background:#f2f1ed;"></div>
<div class="b" style="left:214px;top:44px;width:62px;height:10px;background:#dedbd5;"></div>
<div class="b" style="left:277px;top:44px;width:40px;height:1px;background:#f4f3ef;"></div>
<div class="t" style="left:219.20px;top:46.02px;font-size:7.3px;-webkit-text-stroke:0.06px #000;color:#000;">Simulation View</div>
<div class="t" style="left:283.00px;top:46.42px;font-size:7.3px;-webkit-text-stroke:0.06px #000;color:#000;">Tool View</div>
<div class="b" style="left:276px;top:44px;width:1px;height:10.5px;background:#1a1a1a;"></div>
<div class="b" style="left:317px;top:45px;width:1px;height:9px;background:#1a1a1a;"></div>
<div class="b" style="left:214px;top:54px;width:477px;height:1px;background:#f8f7f4;"></div>
<div class="b" style="left:690px;top:54px;width:3px;height:333px;background:#c9c7c2;box-shadow:inset 1px 0 0 #5e5d5a;"></div>
<div class="b" style="left:214px;top:55px;width:476px;height:323px;background:linear-gradient(#050708,#0f1318 30%,#222e3e);"></div>
<svg class="b" style="left:213px;top:55px;" width="477" height="323" viewBox="0 0 477 323">
<polygon points="65.7,139.8 324.4,114.7 413.9,175.1 77.1,239.8" fill="#0f3662"/>
<polygon points="77.1,239.8 413.9,175.1 409.6,187.9 78.8,256.9" fill="#124478"/>
<line x1="62.8" y1="124.5" x2="66.5" y2="155.5" stroke="#000" stroke-opacity="0.35" stroke-width="3" stroke-linecap="round"/>
<line x1="45.8" y1="142.4" x2="84.1" y2="138.2" stroke="#000" stroke-opacity="0.5" stroke-width="3.2" stroke-linecap="round"/>
<line x1="62.8" y1="124.5" x2="66.5" y2="155.5" stroke="#0a0aff" stroke-width="1.7" stroke-linecap="round"/>
<line x1="65.2" y1="140" x2="66.1" y2="148" stroke="#ff1010" stroke-width="1.8"/>
<polygon points="64.3,145.5 67.3,145.2 66.2,148.8" fill="#ff1010"/>
<line x1="45.8" y1="142.4" x2="84.1" y2="138.2" stroke="#0be80b" stroke-width="1.8" stroke-linecap="round"/>
</svg>
<div class="b" style="left:214px;top:378px;width:476px;height:8px;background:#ebe8e1;"></div>
<div class="b" style="left:214px;top:378px;width:40px;height:8px;background:#dedbd4;"></div>
<div class="t" style="left:213.90px;top:378.22px;font-size:7.3px;-webkit-text-stroke:0.06px #000;color:#000;"><u>Position</u></div>
<div class="b" style="left:254px;top:381px;width:430px;height:1px;background:#b8b4ad;"></div>
<div class="b" style="left:254px;top:382px;width:430px;height:1px;background:#3a3a38;"></div>
<div class="b" style="left:254px;top:383px;width:430px;height:1px;background:#fdfcf8;"></div>
<div class="b" style="left:684px;top:378px;width:6px;height:9px;background:#e6e3dc;border-right:1px solid #1e1e1e;border-bottom:1px solid #1e1e1e;box-shadow:inset 1px 1px 0 #fbfaf6;box-sizing:border-box;"></div>
<div class="b" style="left:212px;top:386.5px;width:478px;height:1px;background:#2a2a2a;"></div>
<div class="t" style="left:213.40px;top:391.82px;font-size:7.3px;-webkit-text-stroke:0.06px #000;color:#000;"><u>Progress</u></div>
<div class="b" style="left:249.5px;top:389.5px;width:407px;height:12px;background:#f7f4ea;border-top:1px solid #b4b0a8;border-left:1px solid #b4b0a8;border-bottom:1px solid #fff;border-right:1px solid #fff;box-sizing:border-box;"></div>
<svg class="b" style="left:250px;top:390px;" width="406" height="11" viewBox="0 0 406 11"><rect x="1.200" y="0.9" width="3.8" height="9.3" fill="#000080"/><rect x="5.957" y="0.9" width="3.8" height="9.3" fill="#000080"/><rect x="10.714" y="0.9" width="3.8" height="9.3" fill="#000080"/><rect x="15.471" y="0.9" width="3.8" height="9.3" fill="#000080"/><rect x="20.228" y="0.9" width="3.8" height="9.3" fill="#000080"/><rect x="24.985" y="0.9" width="3.8" height="9.3" fill="#000080"/><rect x="29.742" y="0.9" width="3.8" height="9.3" fill="#000080"/><rect x="34.499" y="0.9" width="3.8" height="9.3" fill="#000080"/><rect x="39.256" y="0.9" width="3.8" height="9.3" fill="#000080"/><rect x="44.013" y="0.9" width="3.8" height="9.3" fill="#000080"/><rect x="48.770" y="0.9" width="3.8" height="9.3" fill="#000080"/><rect x="53.527" y="0.9" width="3.8" height="9.3" fill="#000080"/><rect x="58.284" y="0.9" width="3.8" height="9.3" fill="#000080"/><rect x="63.041" y="0.9" width="3.8" height="9.3" fill="#000080"/><rect x="67.798" y="0.9" width="3.8" height="9.3" fill="#000080"/><rect x="72.555" y="0.9" width="3.8" height="9.3" fill="#000080"/><rect x="77.312" y="0.9" width="3.8" height="9.3" fill="#000080"/><rect x="82.069" y="0.9" width="3.8" height="9.3" fill="#000080"/><rect x="86.826" y="0.9" width="3.8" height="9.3" fill="#000080"/><rect x="91.583" y="0.9" width="3.8" height="9.3" fill="#000080"/><rect x="96.340" y="0.9" width="3.8" height="9.3" fill="#000080"/><rect x="101.097" y="0.9" width="3.8" height="9.3" fill="#000080"/><rect x="105.854" y="0.9" width="3.8" height="9.3" fill="#000080"/><rect x="110.611" y="0.9" width="3.8" height="9.3" fill="#000080"/><rect x="115.368" y="0.9" width="3.8" height="9.3" fill="#000080"/><rect x="120.125" y="0.9" width="3.8" height="9.3" fill="#000080"/><rect x="124.882" y="0.9" width="3.8" height="9.3" fill="#000080"/><rect x="129.639" y="0.9" width="3.8" height="9.3" fill="#000080"/><rect x="134.396" y="0.9" width="3.8" height="9.3" fill="#000080"/><rect x="139.153" y="0.9" width="3.8" height="9.3" fill="#000080"/><rect x="143.910" y="0.9" width="3.8" height="9.3" fill="#000080"/><rect x="148.667" y="0.9" width="3.8" height="9.3" fill="#000080"/><rect x="153.424" y="0.9" width="3.8" height="9.3" fill="#000080"/><rect x="158.181" y="0.9" width="3.8" height="9.3" fill="#000080"/><rect x="162.938" y="0.9" width="3.8" height="9.3" fill="#000080"/><rect x="167.695" y="0.9" width="3.8" height="9.3" fill="#000080"/><rect x="172.452" y="0.9" width="3.8" height="9.3" fill="#000080"/><rect x="177.209" y="0.9" width="3.8" height="9.3" fill="#000080"/><rect x="181.966" y="0.9" width="3.8" height="9.3" fill="#000080"/><rect x="186.723" y="0.9" width="3.8" height="9.3" fill="#000080"/><rect x="191.480" y="0.9" width="3.8" height="9.3" fill="#000080"/><rect x="196.237" y="0.9" width="3.8" height="9.3" fill="#000080"/><rect x="200.994" y="0.9" width="3.8" height="9.3" fill="#000080"/><rect x="205.751" y="0.9" width="3.8" height="9.3" fill="#000080"/><rect x="210.508" y="0.9" width="3.8" height="9.3" fill="#000080"/><rect x="215.265" y="0.9" width="3.8" height="9.3" fill="#000080"/><rect x="220.022" y="0.9" width="3.8" height="9.3" fill="#000080"/><rect x="224.779" y="0.9" width="3.8" height="9.3" fill="#000080"/><rect x="229.536" y="0.9" width="3.8" height="9.3" fill="#000080"/><rect x="234.293" y="0.9" width="3.8" height="9.3" fill="#000080"/><rect x="239.050" y="0.9" width="3.8" height="9.3" fill="#000080"/><rect x="243.807" y="0.9" width="3.8" height="9.3" fill="#000080"/><rect x="248.564" y="0.9" width="3.8" height="9.3" fill="#000080"/><rect x="253.321" y="0.9" width="3.8" height="9.3" fill="#000080"/><rect x="258.078" y="0.9" width="3.8" height="9.3" fill="#000080"/><rect x="262.835" y="0.9" width="3.8" height="9.3" fill="#000080"/><rect x="267.592" y="0.9" width="3.8" height="9.3" fill="#000080"/><rect x="272.349" y="0.9" width="3.8" height="9.3" fill="#000080"/><rect x="277.106" y="0.9" width="3.8" height="9.3" fill="#000080"/><rect x="281.863" y="0.9" width="3.8" height="9.3" fill="#000080"/><rect x="286.620" y="0.9" width="3.8" height="9.3" fill="#000080"/><rect x="291.377" y="0.9" width="3.8" height="9.3" fill="#000080"/><rect x="296.134" y="0.9" width="3.8" height="9.3" fill="#000080"/><rect x="300.891" y="0.9" width="3.8" height="9.3" fill="#000080"/><rect x="305.648" y="0.9" width="3.8" height="9.3" fill="#000080"/><rect x="310.405" y="0.9" width="3.8" height="9.3" fill="#000080"/><rect x="315.162" y="0.9" width="3.8" height="9.3" fill="#000080"/><rect x="319.919" y="0.9" width="3.8" height="9.3" fill="#000080"/><rect x="324.676" y="0.9" width="3.8" height="9.3" fill="#000080"/><rect x="329.433" y="0.9" width="3.8" height="9.3" fill="#000080"/><rect x="334.190" y="0.9" width="3.8" height="9.3" fill="#000080"/><rect x="338.947" y="0.9" width="3.8" height="9.3" fill="#000080"/><rect x="343.704" y="0.9" width="3.8" height="9.3" fill="#000080"/><rect x="348.461" y="0.9" width="3.8" height="9.3" fill="#000080"/><rect x="353.218" y="0.9" width="3.8" height="9.3" fill="#000080"/><rect x="357.975" y="0.9" width="3.8" height="9.3" fill="#000080"/><rect x="362.732" y="0.9" width="3.8" height="9.3" fill="#000080"/><rect x="367.489" y="0.9" width="3.8" height="9.3" fill="#000080"/><rect x="372.246" y="0.9" width="3.8" height="9.3" fill="#000080"/><rect x="377.003" y="0.9" width="3.8" height="9.3" fill="#000080"/><rect x="381.760" y="0.9" width="3.8" height="9.3" fill="#000080"/><rect x="386.517" y="0.9" width="3.8" height="9.3" fill="#000080"/><rect x="391.274" y="0.9" width="3.8" height="9.3" fill="#000080"/><rect x="396.031" y="0.9" width="3.8" height="9.3" fill="#000080"/><rect x="400.788" y="0.9" width="3.8" height="9.3" fill="#000080"/></svg>
<div class="t" style="left:658.60px;top:391.92px;font-size:7.3px;-webkit-text-stroke:0.06px #000;color:#000;">100.00%</div>
<div class="b" style="left:663px;top:403px;width:19px;height:17.5px;background:#dcd9d2;border-top:1px solid #8e8a83;border-left:1px solid #8e8a83;border-right:1px solid #f7f6f2;border-bottom:1px solid #f7f6f2;box-sizing:border-box;"></div>
<svg class="b" style="left:664px;top:405px;" width="17" height="14" viewBox="0 0 17 14"><path d="M2,4.8 H8.6 L2.2,11.2 H9" stroke="#1a1a1a" stroke-width="1.7" fill="none" stroke-linejoin="miter"/><path d="M10.4,2.6 H15.3 L10.5,7.4 H15.6" stroke="#1a1a1a" stroke-width="1.3" fill="none"/></svg>
<svg class="b" style="left:684px;top:412px;" width="9" height="10" viewBox="0 0 9 10"><path d="M8,2 L1,9 M8,4.5 L3.5,9 M8,7 L6,9" stroke="#9a968f" stroke-width="0.9" stroke-dasharray="1,0.8"/></svg>
</body></html>
